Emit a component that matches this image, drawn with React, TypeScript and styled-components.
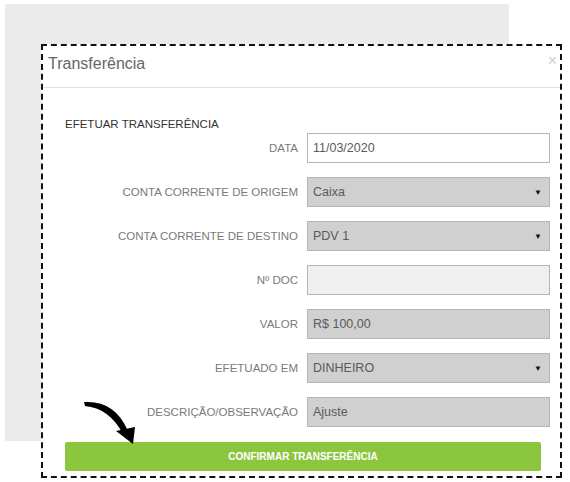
import React from 'react';
import styled, { createGlobalStyle } from 'styled-components';

const GlobalStyle = createGlobalStyle`
  html, body {
    margin: 0;
    padding: 0;
    background: #ffffff;
  }
  body {
    font-family: "Liberation Sans", Arial, sans-serif;
  }
`;

const Page = styled.div`
  position: relative;
  width: 570px;
  height: 482px;
  overflow: hidden;
`;

const Backdrop = styled.div`
  margin: 4px 0 0 5px;
  width: 504px;
  height: 437px;
  background: #ebebeb;
`;

const Modal = styled.div`
  position: absolute;
  left: 41px;
  top: 44px;
  width: 521px;
  height: 434px;
  box-sizing: border-box;
  border: 2px dashed #111111;
  background: #ffffff;
`;

const Header = styled.div`
  display: flex;
  justify-content: space-between;
  align-items: flex-start;
  height: 41px;
  padding: 0 3px 0 5px;
  border-bottom: 1px solid #e3e3e3;
`;

const Title = styled.span`
  margin-top: 8px;
  font-size: 16px;
  line-height: 20px;
  color: #666666;
`;

const Close = styled.span`
  margin-top: 7px;
  font-size: 16px;
  line-height: 16px;
  color: #d0d0d0;
`;

const Body = styled.div`
  padding: 28px 9px 6px 22px;
`;

const SectionTitle = styled.div`
  font-size: 11.5px;
  line-height: 16px;
  color: #333333;
`;

const FormGrid = styled.div`
  display: grid;
  grid-template-columns: 233px 243px;
  column-gap: 9px;
  row-gap: 14px;
  margin-top: 1px;
`;

const Label = styled.label`
  display: flex;
  align-items: center;
  justify-content: flex-end;
  height: 30px;
  font-size: 11.5px;
  color: #7a7a7a;
  white-space: nowrap;
`;

type Tone = 'white' | 'gray' | 'light';

const toneBg: Record<Tone, string> = {
  white: '#ffffff',
  gray: '#d0d0d0',
  light: '#efefef',
};

const Field = styled.div<{ $tone: Tone }>`
  display: flex;
  align-items: center;
  justify-content: space-between;
  box-sizing: border-box;
  height: 30px;
  padding: 0 7px 0 5px;
  border: 1px solid #b5b5b5;
  background: ${({ $tone }) => toneBg[$tone]};
  font-size: 12.5px;
  color: #5a5a5a;
`;

const Caret = styled.span`
  font-size: 8px;
  color: #111111;
`;

const ConfirmButton = styled.button`
  display: block;
  width: 476px;
  height: 29px;
  margin-top: 15px;
  padding: 0;
  border: none;
  border-radius: 2px;
  background: #8cc63f;
  color: #ffffff;
  font-family: inherit;
  font-size: 10px;
  font-weight: 700;
  cursor: pointer;
`;

const Arrow = styled.svg`
  position: absolute;
  left: 80px;
  top: 398px;
`;

interface Row {
  label: string;
  value: string;
  tone: Tone;
  select?: boolean;
}

const rows: Row[] = [
  { label: 'DATA', value: '11/03/2020', tone: 'white' },
  { label: 'CONTA CORRENTE DE ORIGEM', value: 'Caixa', tone: 'gray', select: true },
  { label: 'CONTA CORRENTE DE DESTINO', value: 'PDV 1', tone: 'gray', select: true },
  { label: 'Nº DOC', value: '', tone: 'light' },
  { label: 'VALOR', value: 'R$ 100,00', tone: 'gray' },
  { label: 'EFETUADO EM', value: 'DINHEIRO', tone: 'gray', select: true },
  { label: 'DESCRIÇÃO/OBSERVAÇÃO', value: 'Ajuste', tone: 'gray' },
];

const App: React.FC = () => {
  return (
    <Page>
      <GlobalStyle />
      <Backdrop />
      <Modal>
        <Header>
          <Title>Transferência</Title>
          <Close>×</Close>
        </Header>
        <Body>
          <SectionTitle>EFETUAR TRANSFERÊNCIA</SectionTitle>
          <FormGrid>
            {rows.map(row => (
              <React.Fragment key={row.label}>
                <Label>{row.label}</Label>
                <Field $tone={row.tone}>
                  <span>{row.value}</span>
                  {row.select && <Caret>▼</Caret>}
                </Field>
              </React.Fragment>
            ))}
          </FormGrid>
          <ConfirmButton>CONFIRMAR TRANSFERÊNCIA</ConfirmButton>
        </Body>
      </Modal>
      <Arrow width="60" height="50" viewBox="0 0 60 50">
        <path d="M4 4 Q35 2 48 33 L43 36 Q29 10 5 8 Z" fill="#000" />
        <polygon points="36,33 55,29 53,46" fill="#000" />
      </Arrow>
    </Page>
  );
};

export default App;
